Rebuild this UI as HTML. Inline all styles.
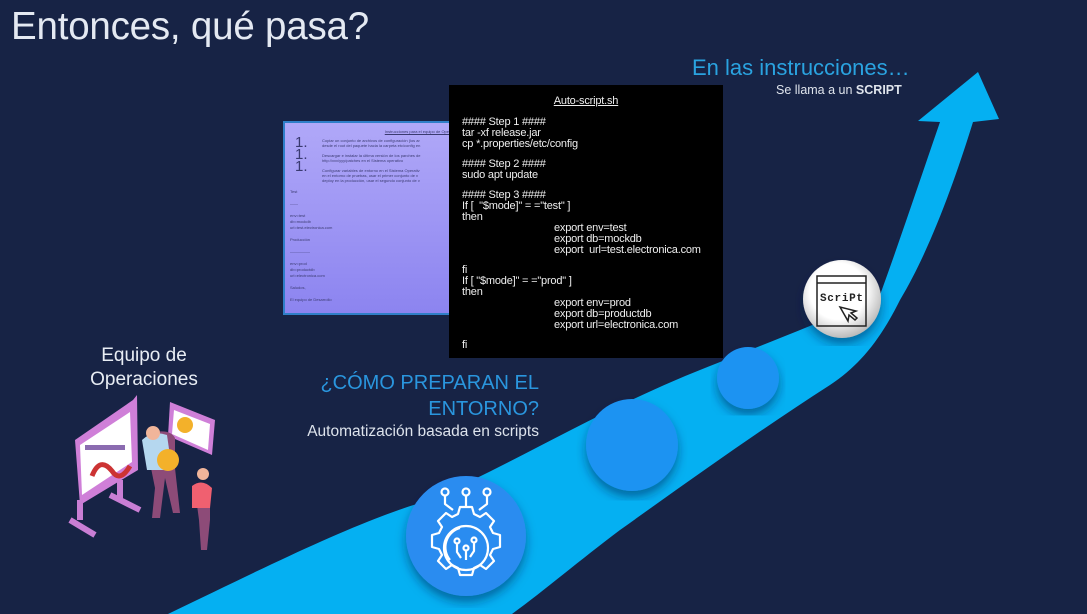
<!DOCTYPE html>
<html><head><meta charset="utf-8"><style>
*{margin:0;padding:0;box-sizing:border-box}
body{width:1087px;height:614px;overflow:hidden;background:#172345;font-family:"Liberation Sans",sans-serif;position:relative}
.a{position:absolute;white-space:nowrap}
#doc{left:283px;top:121px;width:170px;height:194px;background:linear-gradient(#b0a8f8,#8c84f0);border:2px solid #2f7fc8;overflow:hidden;color:#3a3a70;font-size:4px;line-height:5px;padding:6px 0 0 5px}
#code{left:449px;top:85px;width:274px;height:273px;background:#000;color:#eee;padding:11px 0 0 13px;font-size:11px;line-height:11px;letter-spacing:-0.2px;white-space:pre}
#code .b{height:9px}
#code .i{padding-left:92px}
</style></head><body>
<div class="a" style="left:11px;top:5px;font-size:38.5px;color:#e4e9f2;letter-spacing:-0.2px">Entonces, qué pasa?</div>
<div class="a" style="left:692px;top:55px;font-size:22px;color:#2aa3e0">En las instrucciones…</div>
<div class="a" style="left:776px;top:83px;font-size:12.5px;color:#dfe4ec">Se llama a un <b>SCRIPT</b></div>

<svg class="a" style="left:0;top:0" width="1087" height="614">
<defs><radialGradient id="w" cx=".45" cy=".4" r=".6"><stop offset=".6" stop-color="#fff"/><stop offset="1" stop-color="#bbb"/></radialGradient>
<filter id="sh"><feDropShadow dx="0" dy="6" stdDeviation="5" flood-color="#002050" flood-opacity=".5"/></filter></defs>
<path d="M168 614 C280 560 360 520 430 500 C520 460 600 410 700 370 C780 338 840 315 880 295 C900 240 920 180 940 122 L918 121 L978 72 L999 119 L973 122 C955 180 930 250 900 300 C880 340 860 365 830 385 C760 430 690 480 620 530 C580 560 545 590 512 614 Z" fill="#05b0f2"/>
<circle cx="632" cy="445" r="46" fill="#1a93f2" filter="url(#sh)"/>
<circle cx="748" cy="378" r="31" fill="#1a93f2" filter="url(#sh)"/>
<circle cx="466" cy="536" r="60" fill="#2a8cf0" filter="url(#sh)"/>
<circle cx="842" cy="299" r="39" fill="url(#w)" filter="url(#sh)"/>
<g fill="none" stroke="#222" stroke-width="1.5"><rect x="817" y="276" width="49" height="50"/><line x1="817" y1="283" x2="866" y2="283"/></g>
<text x="820" y="301" font-size="11" font-family="Liberation Mono,monospace" font-weight="bold" fill="#222" textLength="43">ScriPt</text>
<path d="M840 307 L848 321 L849 315 L855 320 L857 318 L851 313 L856 311 Z" fill="none" stroke="#222" stroke-width="1.5"/>
<g fill="none" stroke="#fff" stroke-width="2.2" stroke-linejoin="round">
<path d="M460 507 h12 l2 7 6 3 6-4 8 8-4 6 3 6 7 2 v12 l-7 2-3 6 4 6-8 8-6-4-6 3-2 7 h-12 l-2-7-6-3-6 4-8-8 4-6-3-6-7-2 v-12 l7-2 3-6-4-6 8-8 6 4 6-3 z"/>
<circle cx="466" cy="548" r="22"/><path d="M450 560a20 20 0 0 1 10-32"/>
<circle cx="445" cy="492" r="3.5"/><circle cx="466" cy="492" r="3.5"/><circle cx="487" cy="492" r="3.5"/>
<path d="M445 496v8l8 6 M466 496v11 M487 496v8l-8 6"/>
<circle cx="457" cy="541" r="2.5"/><circle cx="466" cy="548" r="2.5"/><circle cx="474" cy="540" r="2.5"/>
<path d="M457 544v8l4 6 M466 551v9 M474 543v8l-4 6"/>
</g>
<g>
<polygon points="75,440 133,400 137,395 138,470 80,505" fill="#cf7fd8"/>
<polygon points="80,445 130,412 132,462 82,495" fill="#fff"/>
<path d="M92 476 q8-20 20-5 q8 12 18-5" stroke="#c33" stroke-width="5" fill="none"/>
<rect x="85" y="445" width="40" height="5" fill="#8b6bb0"/>
<path d="M80 500 L80 520 M70 520 L95 535 M120 480 L120 500 M110 495 L140 510" stroke="#c97ed4" stroke-width="6"/>
<polygon points="170,402 215,420 212,455 168,436" fill="#cf7fd8"/>
<polygon points="174,410 210,424 208,450 172,434" fill="#fff"/>
<circle cx="185" cy="425" r="8" fill="#f3b12a"/>
<path d="M150 433 q-8 10 0 30 l5 25 l-3 30 h8 l5-40 l8 35 h7 l-5-45 v-30 q-5-10 -25-5z" fill="#8d4b78"/>
<path d="M142 440 q10-10 25-5 l5 35 h-25 z" fill="#b5d7ef"/>
<circle cx="153" cy="433" r="7" fill="#f1b59a"/>
<circle cx="168" cy="460" r="11" fill="#f3b12a"/>
<path d="M195 490 q10-5 15 5 v25 l-3 30 h-6 l-2-30 z" fill="#8d4b78"/>
<path d="M192 486 q10-8 20 2 l-2 20 h-18 z" fill="#f06070"/>
<circle cx="203" cy="474" r="6" fill="#f1b59a"/>
</g>
</svg>

<div class="a" style="left:64px;top:344px;width:160px;text-align:center;color:#e8edf4;font-size:19px;line-height:24px">Equipo de<br>Operaciones</div>
<div class="a" style="left:270px;top:370px;width:269px;text-align:right;color:#2a96de;font-size:20px;line-height:26px">¿CÓMO PREPARAN EL<br>ENTORNO?</div>
<div class="a" style="left:270px;top:423px;width:269px;text-align:right;color:#dde3ec;font-size:15.5px">Automatización basada en scripts</div>

<div id="doc" class="a">
<div style="text-align:right;text-decoration:underline;padding-right:2px">Instrucciones para el equipo de Ope</div>
<div style="font-size:15px;line-height:12px;position:absolute;left:10px;top:14px">1.<br>1.<br>1.</div>
<div style="padding-left:32px;margin-top:4px">Copiar un conjunto de archivos de configuración (los ar<br>desde el root del paquete hacia la carpeta etc/config en<br><br>Descargar e instalar la última versión de los parches de<br>http://xxx/yyy/patches en el Sistema operativo<br><br>Configurar variables de entorno en el Sistema Operativ<br>en el entorno de pruebas, usar el primer conjunto de v<br>deploy en la producción, usar el segundo conjunto de v</div>
<div style="margin-top:6px;line-height:6px">Test<br><br>——<br><br>env=test<br>db=mockdb<br>url=test.electronica.com<br><br>Producción<br><br>—————<br><br>env=prod<br>db=productdb<br>url=electronica.com<br><br>Saludos,<br><br>El equipo de Desarrollo</div>
</div>

<div id="code" class="a"><div style="text-align:center;text-decoration:underline;margin-bottom:10px;padding-right:13px">Auto-script.sh</div><div>#### Step 1 ####</div><div>tar -xf release.jar</div><div>cp *.properties/etc/config</div><div class="b"></div><div>#### Step 2 ####</div><div>sudo apt update</div><div class="b"></div><div>#### Step 3 ####</div><div>If [  "$mode]" = ="test" ]</div><div>then</div><div class="i">export env=test</div><div class="i">export db=mockdb</div><div class="i">export  url=test.electronica.com</div><div class="b"></div><div>fi</div><div>If [ "$mode]" = ="prod" ]</div><div>then</div><div class="i">export env=prod</div><div class="i">export db=productdb</div><div class="i">export url=electronica.com</div><div class="b"></div><div>fi</div></div>
</body></html>
